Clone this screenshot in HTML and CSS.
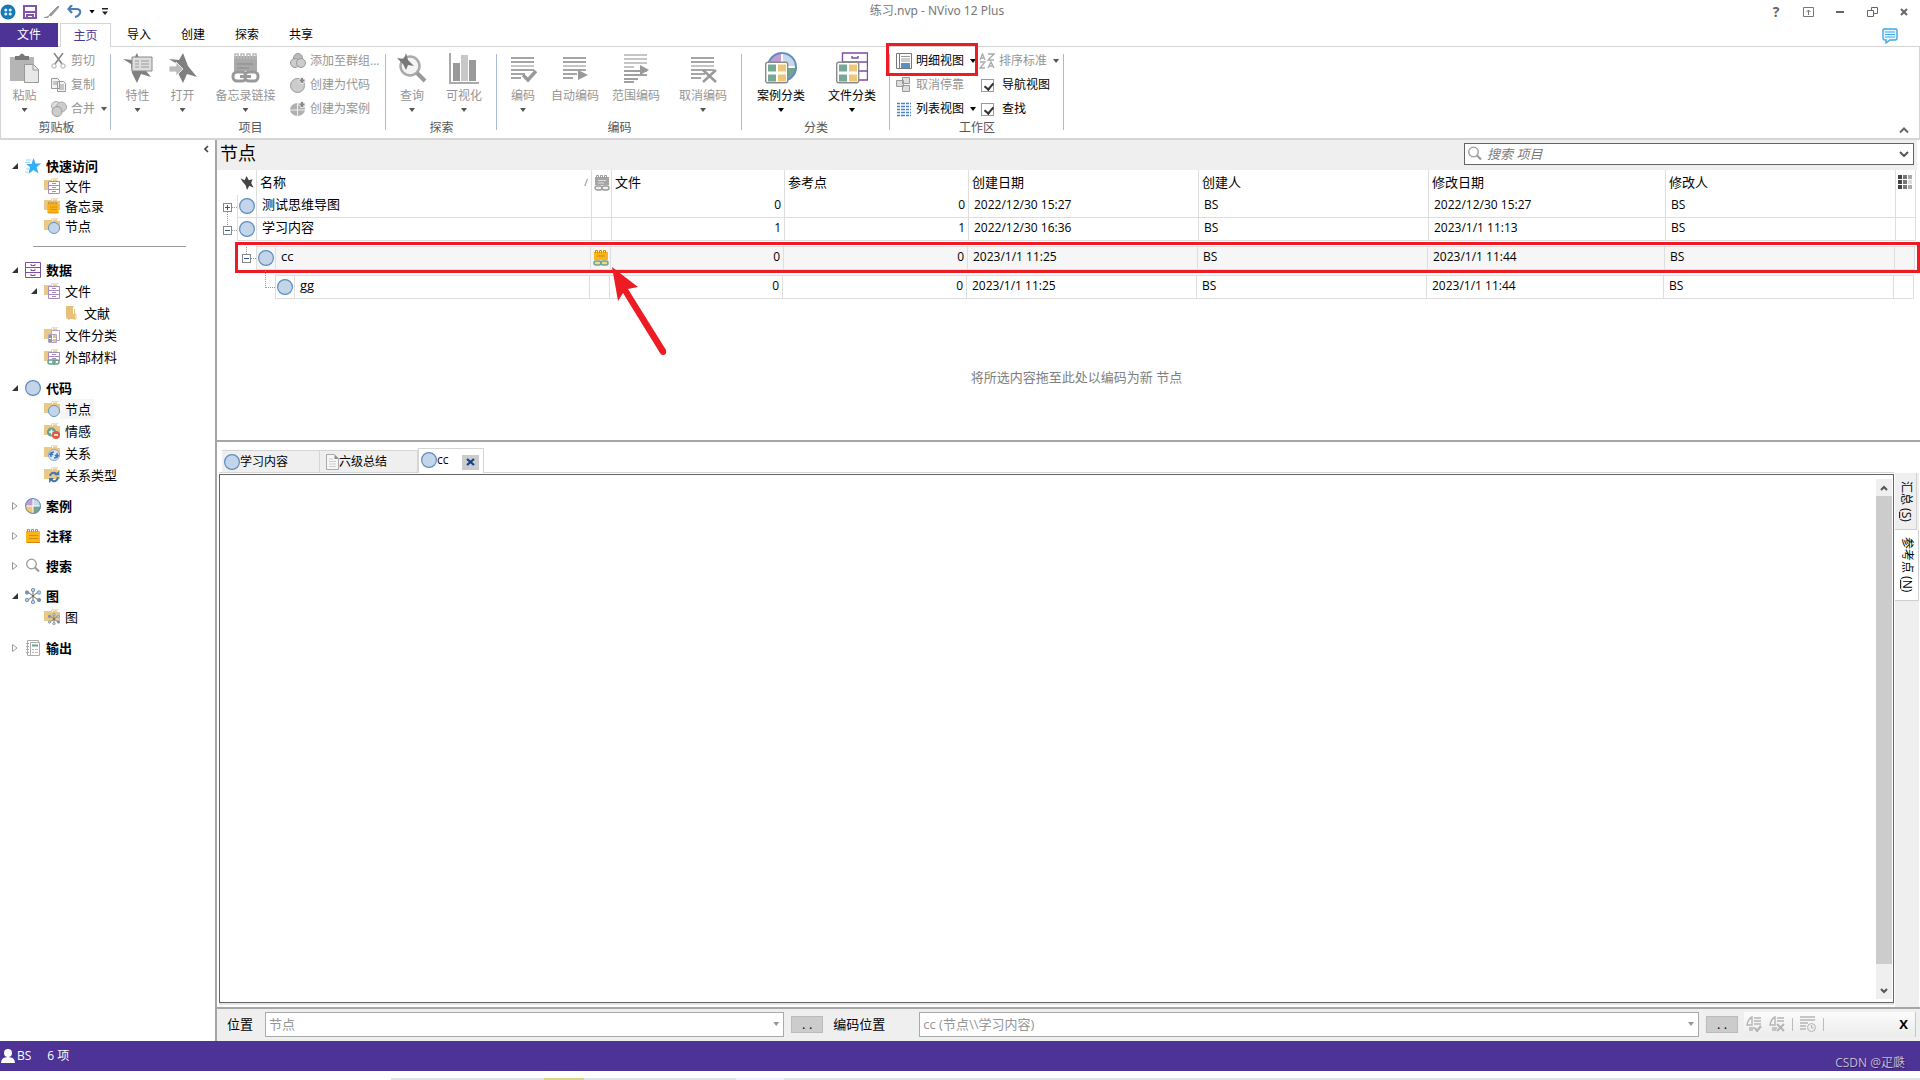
FILE: index.html
```html
<!DOCTYPE html>
<html lang="zh-CN">
<head>
<meta charset="utf-8">
<title>练习.nvp - NVivo 12 Plus</title>
<link rel="stylesheet" href="styles.css">
</head>
<body>
<svg class="sprite" aria-hidden="true">
  <symbol id="node" viewBox="0 0 16 16"><circle cx="8" cy="8" r="7.4" fill="#c5d5e9" stroke="#5b8ec2" stroke-width="1.2"/></symbol>
  <symbol id="folder" viewBox="0 0 16 16"><path d="M0 2h7l1-2h6v3h2v9H0z" fill="#e9c888"/><path d="M8.500 3V1h5v2" fill="none" stroke="#fff8e8"/></symbol>
  <symbol id="cabinet" viewBox="0 0 16 16"><path d="M.5.5h15v15H.5zM.5 5.500h15M.5 10.500h15M6 2v1.500h4V2M6 7v1.500h4V7M6 12v1.500h4V12" fill="#fff" stroke="#7d4fa0"/></symbol>
  <symbol id="pad" viewBox="0 0 16 16"><path d="M1 4q0-1 1-1h12q1 0 1 1v10q0 1-1 1H2q-1 0-1-1z" fill="#f9b418"/><path d="M2.500 4V1.500h2V4M6.500 4V1.500h2V4M10.500 4V1.500h2V4" fill="none" stroke="#c9862b"/><path d="M4 7.500h9M4 10.500h9M2 14.500h13" stroke="#d38a10"/></symbol>
  <symbol id="f-files" viewBox="0 0 16 16"><use href="#folder" width="16" height="16"/><path d="M4.500 3.500h11v12h-11zM4.500 7.500h11M4.500 11.500h11M8 5.500h4M8 9.500h4M8 13.500h4" fill="#fff" stroke="#a88bbd"/></symbol>
  <symbol id="f-pad" viewBox="0 0 16 16"><use href="#folder" width="16" height="16"/><use href="#pad" x="2" y="3" width="14" height="13"/></symbol>
  <symbol id="f-node" viewBox="0 0 16 16"><use href="#folder" width="16" height="16"/><use href="#node" x="4" y="4" width="12" height="12"/></symbol>
  <symbol id="f-class" viewBox="0 0 16 16"><use href="#folder" width="16" height="16"/><path d="M7.500 3.500h8v10h-8zM4.500 7.500h8v8h-8z" fill="#fff" stroke="#b5a3c4"/><path d="M5 8h3v3H5zM5 12h3v3H5z" fill="#72a492"/><path d="M9 8h3v3H9zM9 12h3v3H9z" fill="#edc679"/></symbol>
  <symbol id="f-ext" viewBox="0 0 16 16"><use href="#folder" width="16" height="16"/><path d="M4.500 3.500h11v8h-11zM4.500 7.500h11M8 5.500h4M8 9.500h4" fill="#fff" stroke="#a88bbd"/><rect x="4" y="11" width="7" height="4" rx="2" fill="#fff" stroke="#67a08d" stroke-width="1.500"/><rect x="9" y="11" width="6" height="4" rx="2" fill="none" stroke="#67a08d" stroke-width="1.500"/></symbol>
  <symbol id="f-sent" viewBox="0 0 16 16"><use href="#folder" width="16" height="16"/><circle cx="7.500" cy="9" r="4.500" fill="#67a08d"/><path d="M7.500 6.500v5M5 9h5" stroke="#fff" stroke-width="1.500"/><circle cx="12" cy="12" r="4" fill="#db5b45"/><path d="M10 12h4" stroke="#fff" stroke-width="1.500"/></symbol>
  <symbol id="f-rel" viewBox="0 0 16 16"><use href="#folder" width="16" height="16"/><circle cx="10" cy="10" r="5.500" fill="#dde8f4" stroke="#7fa5cf"/><path d="M7 12V9q0-2 3-2M5.500 10L7 8l2 2M13 8v3q0 2-3 2M11 10l2 2 1.500-2" fill="none" stroke="#3f76b5" stroke-width="1.500"/></symbol>
  <symbol id="f-rtype" viewBox="0 0 16 16"><use href="#folder" width="16" height="16"/><path d="M6 9q1-4 5-3l2 2M14 10q-1 5-5 4l-2-2" fill="none" stroke="#3f76b5" stroke-width="2"/><path d="M10 8h5V4zM10 11H5v5z" fill="#3f76b5"/></symbol>
  <symbol id="map" viewBox="0 0 16 16"><path d="M8 8V2M8 8v6M8 8L3 4M8 8l5-4M8 8l-5 4M8 8l5 4" stroke="#666"/><g fill="#b9cfe6" stroke="#7794b5"><circle cx="8" cy="2" r="1.700"/><circle cx="8" cy="14" r="1.700"/><circle cx="14" cy="4.500" r="1.700"/><circle cx="14" cy="12" r="1.700" fill="#7794b5"/><circle cx="2" cy="4.500" r="1.700" fill="#7794b5"/><circle cx="2" cy="12" r="1.700"/></g></symbol>
  <symbol id="f-map" viewBox="0 0 16 16"><use href="#folder" width="16" height="16"/><use href="#map" x="4" y="4" width="12" height="12"/></symbol>
  <symbol id="open-folder" viewBox="0 0 16 16"><path d="M3 1h8v3h1v10H7l-1 1-3-2z" fill="#e7c17a"/><path d="M10 2v7h3v5h-3" fill="none" stroke="#e7c17a"/><path d="M10.500 2v7" stroke="#fff"/></symbol>
  <symbol id="star" viewBox="0 0 16 16"><path d="M8.500 0l2 5.500H16l-4.500 3.800 2 6.200-5-3.500-5 4 1.500-7L1 6h5.500z" fill="#32aefa"/><path d="M1 2h5M0 4.500h5M1 11h3M0 14h3" stroke="#9bd6fb"/></symbol>
  <symbol id="case" viewBox="0 0 16 16"><path d="M8 8V0A8 8 0 0 0 0 8z" fill="#c39bd3"/><path d="M8 8V0a8 8 0 0 1 8 8z" fill="#c8d8eb"/><path d="M8 8h8a8 8 0 0 1-8 8z" fill="#74a591"/><path d="M8 8v8a8 8 0 0 1-8-8z" fill="#edc679"/><path d="M8 1v14M1 8h14" stroke="#fff"/><circle cx="8" cy="8" r="7.400" fill="none" stroke="#5b8ec2"/></symbol>
  <symbol id="search" viewBox="0 0 16 16"><circle cx="6.500" cy="6" r="4.800" fill="#fff" stroke="currentColor" stroke-width="1.300"/><path d="M10 9.500l4 4" stroke="currentColor" stroke-width="2.200"/></symbol>
  <symbol id="report" viewBox="0 0 16 16"><path d="M2.500.5h11v15h-11zM1 3.500h3M1 6.500h3M1 9.500h3M1 12.500h3" fill="#fff" stroke="#aaa"/><path d="M5.500 2.500h9v13h-9z" fill="#fff" stroke="#aaa"/><path d="M7 5.500h6" stroke="#67a08d" stroke-width="2"/><path d="M7 9.500h2M10 9.500h3M7 12.500h2M10 12.500h3" stroke="#bbb"/></symbol>
  <symbol id="memo-gray" viewBox="0 0 16 16"><path d="M1 2h14v8H1z" fill="#a5a5a5"/><path d="M2.500 3V.5h2V3M6.500 3V.5h2V3M10.500 3V.5h2V3" fill="none" stroke="#999"/><path d="M4 5.500h8M4 8h6" stroke="#ddd"/><rect x="1" y="11" width="7" height="4" rx="2" fill="#eee" stroke="#999" stroke-width="1.300"/><rect x="8" y="11" width="7" height="4" rx="2" fill="#eee" stroke="#999" stroke-width="1.300"/></symbol>
  <symbol id="memo" viewBox="0 0 16 16"><path d="M1 2h14v8H1z" fill="#fcb514"/><path d="M2.500 3V.5h2V3M6.500 3V.5h2V3M10.500 3V.5h2V3M4 6h8" fill="none" stroke="#c9862b"/><rect x="1" y="11" width="7" height="4" rx="2" fill="#f9d976" stroke="#67a59a" stroke-width="1.500"/><rect x="8" y="11" width="7" height="4" rx="2" fill="#f9d976" stroke="#67a59a" stroke-width="1.500"/></symbol>
  <symbol id="nstar" viewBox="0 0 28 30"><path d="M14 0l5 13 9 11-10-3-4 9-5-10-1-9-8-5 10 1z" fill="#808080"/></symbol>
  <symbol id="lines" viewBox="0 0 28 30"><path d="M2 5h23M2 9h23M2 17h23M2 21h14M2 25h10" stroke="#a5a5a5" stroke-width="2"/><path d="M2 13h23" stroke="#c5c5c5" stroke-width="2"/></symbol>
  <symbol id="grid4" viewBox="0 0 24 22"><rect x=".7" y=".7" width="22" height="20.600" rx="2" fill="#fff" stroke="#8a8a8a" stroke-width="1.400"/><path d="M3 3h8v7H3zM3 13h8v7H3z" fill="#77a797"/><path d="M13 3h8v7h-8zM13 13h8v7h-8z" fill="#edc679"/></symbol>
  <symbol id="open" viewBox="0 0 6 6"><path d="M6 0v6H0z" fill="#333"/></symbol>
  <symbol id="closed" viewBox="0 0 6 8"><path d="M.5.500l4.500 3.500-4.500 3.500z" fill="#fff" stroke="#999"/></symbol>
</svg>

<header class="titlebar">
  <div class="quick">
    <svg width="16" height="16" viewBox="0 0 16 16"><circle cx="8" cy="8" r="7.500" fill="#1877b5"/><g fill="#d5efff"><circle cx="5.800" cy="6" r="1.600"/><circle cx="10.200" cy="6" r="1.600"/><circle cx="5.800" cy="10" r="1.600"/><circle cx="10.200" cy="10" r="1.600"/></g></svg>
    <button aria-label="保存"><svg width="14" height="14" viewBox="0 0 14 14"><path d="M1 1h12v12H1z" fill="#fff" stroke="#8553a8" stroke-width="2"/><path d="M1 7h12M4 13v-3h6v3" stroke="#8553a8" stroke-width="2" fill="none"/></svg></button>
    <button aria-label="编辑"><svg width="16" height="14" viewBox="0 0 16 14"><path d="M5 10l9-9 1 1-8 9zM0 12.500h4l1-2" fill="#999" stroke="#999"/></svg></button>
    <button aria-label="撤消"><svg width="15" height="13" viewBox="0 0 15 13"><path d="M2 4h7q5 0 4 4-1 3-5 4M5 0L1.500 4 5 8" fill="none" stroke="#4a7ebb" stroke-width="2.200"/></svg></button>
    <i class="caret"></i><i class="more"></i>
  </div>
  <h1>练习.nvp - NVivo 12 Plus</h1>
  <div class="winbtns">
    <button aria-label="帮助">?</button>
    <button aria-label="功能区选项"><svg width="11" height="10" viewBox="0 0 11 10"><path d="M.5.500h10v9H.5zM5.500 8V3M3.500 5l2-2 2 2" fill="none" stroke="#777"/></svg></button>
    <button aria-label="最小化"><svg width="8" height="2"><path d="M0 0h8v2H0z" fill="#666"/></svg></button>
    <button aria-label="还原"><svg width="11" height="10" viewBox="0 0 11 10"><path d="M.5 3.500h6v6h-6zM4.500 3V.5h6v6H7" fill="none" stroke="#666"/></svg></button>
    <button aria-label="关闭"><svg width="8" height="8" viewBox="0 0 8 8"><path d="M1 1l6 6M7 1L1 7" stroke="#666" stroke-width="2"/></svg></button>
  </div>
</header>

<nav class="tabs">
  <button class="file">文件</button><button class="on">主页</button><button>导入</button><button>创建</button><button>探索</button><button>共享</button>
  <button class="comment" aria-label="反馈"><svg width="16" height="16" viewBox="0 0 16 16"><path d="M2 1h12q1 0 1 1v8q0 2-2 2H8l-4 3v-3H3q-2 0-2-2V2q0-1 1-1z" fill="#e8f5fe" stroke="#41a8e8" stroke-width="1.400"/><path d="M3 4h10M3 6.500h10M3 9h10" stroke="#41a8e8"/></svg></button>
</nav>

<section class="ribbon">
  <div class="group g1">
    <div class="tools">
      <button class="big w-s off"><svg width="29" height="30" viewBox="0 0 29 30"><path d="M0 4h24v24H0z" fill="#b5b5b5"/><path d="M5 3h4q3-5 6 0h4v4H5z" fill="#777"/><path d="M14.500 11.500h9l5 5v13h-14z" fill="#e8e8e8" stroke="#999"/><path d="M23 12v5h5" fill="none" stroke="#999"/></svg><span>粘贴</span><i class="caret"></i></button>
      <div class="stack off">
        <button><svg width="16" height="16" viewBox="0 0 16 16"><path d="M3 0l8 11M12 0L4 11" stroke="#888" stroke-width="1.600"/><circle cx="3" cy="13" r="2.200" fill="#fff" stroke="#aaa"/><circle cx="12" cy="13" r="2.200" fill="#fff" stroke="#aaa"/></svg>剪切</button>
        <button><svg width="16" height="16" viewBox="0 0 16 16"><path d="M.5 1.500h6l2 2v8h-8zM6.500 4.500h6l2 2v8h-8z" fill="#f2f2f2" stroke="#999"/><path d="M2 5h4M2 7h4M8 8h5M8 10h5M8 12h5" stroke="#999"/></svg>复制</button>
        <button><svg width="16" height="16" viewBox="0 0 16 16"><circle cx="5" cy="5" r="4.500" fill="#ddd" stroke="#aaa"/><circle cx="10.500" cy="6" r="5" fill="#ccc" stroke="#aaa"/><circle cx="6" cy="10.500" r="5" fill="#ccc" stroke="#999"/></svg>合并<i class="caret"></i></button>
      </div>
    </div>
    <div class="cap">剪贴板</div>
  </div>
  <div class="group g2">
    <div class="tools">
      <button class="big w-s off"><svg width="30" height="30" viewBox="0 0 30 30"><use href="#nstar" width="28" height="30"/><path d="M9 4h20v14H9z" fill="#ddd" stroke="#888"/><path d="M12 8h4M18 8h8M12 11h4M18 11h8M12 14h4M18 14h8" stroke="#999"/></svg><span>特性</span><i class="caret"></i></button>
      <button class="big w-s off"><svg width="28" height="30" viewBox="0 0 28 30"><use href="#nstar" width="28" height="30"/><path d="M0 13h7V9l7 7-7 7v-4H0z" fill="#bbb" stroke="#fff" stroke-width=".8"/></svg><span>打开</span><i class="caret"></i></button>
      <button class="big w-memo off"><svg width="29" height="31" viewBox="0 0 29 31"><path d="M3 3h23v15H3z" fill="#aaa"/><path d="M4 6V1h3v5M10 6V1h3v5M16 6V1h3v5M22 6V1h3v5" fill="none" stroke="#bbb" stroke-width="1.500"/><path d="M6 11h16M6 15h12" stroke="#888"/><rect x="2" y="19" width="13" height="9" rx="4" fill="#fff" stroke="#999" stroke-width="3"/><rect x="14" y="19" width="13" height="9" rx="4" fill="#fff" stroke="#999" stroke-width="3"/><path d="M9 23.500h11" stroke="#999" stroke-width="3"/></svg><span>备忘录链接</span><i class="caret"></i></button>
      <div class="stack off">
        <button><svg width="16" height="16" viewBox="0 0 16 16"><circle cx="8" cy="5" r="4.500" fill="#bbb" stroke="#999"/><circle cx="5" cy="10" r="4.500" fill="#ccc" stroke="#999"/><circle cx="11" cy="10" r="4.500" fill="#ccc" stroke="#999"/></svg>添加至群组...</button>
        <button><svg width="16" height="16" viewBox="0 0 16 16"><circle cx="7.500" cy="8.500" r="7" fill="#ccc" stroke="#999"/><path d="M12 0v7M8.500 3.500h7" stroke="#eee" stroke-width="3"/><path d="M12 1v5M9.500 3.500h5" stroke="#888" stroke-width="2"/></svg>创建为代码</button>
        <button><svg width="16" height="16" viewBox="0 0 16 16"><ellipse cx="7.500" cy="8.500" rx="7.500" ry="6.500" fill="#b0b0b0"/><path d="M7.500 2v13M0 9h15" stroke="#eee"/><path d="M12 0v7M8.500 3.500h7" stroke="#eee" stroke-width="3"/><path d="M12 1v5M9.500 3.500h5" stroke="#888" stroke-width="2"/></svg>创建为案例</button>
      </div>
    </div>
    <div class="cap">项目</div>
  </div>
  <div class="group g3">
    <div class="tools">
      <button class="big w-m off"><svg width="30" height="30" viewBox="0 0 30 30"><circle cx="13" cy="13" r="9.500" fill="#f4f4f4" stroke="#aaa" stroke-width="2.500"/><path d="M20 20l8 8" stroke="#999" stroke-width="4"/><path d="M9 0l2 7 6 6-6-1-2 5-3-6-6-6 7 1z" fill="#777"/></svg><span>查询</span><i class="caret"></i></button>
      <button class="big w-m off"><svg width="30" height="31" viewBox="0 0 30 31"><path d="M1 0v30h29" fill="none" stroke="#aaa" stroke-width="2"/><path d="M4 10h7v18H4zM20 7h7v21h-7z" fill="#999"/><path d="M12 2h7v26h-7z" fill="#c8c8c8"/></svg><span>可视化</span><i class="caret"></i></button>
    </div>
    <div class="cap">探索</div>
  </div>
  <div class="group g4">
    <div class="tools">
      <button class="big w-m off"><svg width="28" height="30" viewBox="0 0 28 30"><use href="#lines" width="28" height="30"/><path d="M14 22l5 5 8-9" fill="none" stroke="#999" stroke-width="3.500"/></svg><span>编码</span><i class="caret"></i></button>
      <button class="big w-m off"><svg width="28" height="30" viewBox="0 0 28 30"><use href="#lines" width="28" height="30"/><path d="M17 17l10 5-10 5z" fill="#999"/></svg><span>自动编码</span></button>
      <button class="big w-wide off"><svg width="28" height="30" viewBox="0 0 28 30"><path d="M2 2h23M2 6h23M2 10h23M2 14h10" stroke="#c5c5c5" stroke-width="2"/><path d="M2 18h23M2 22h23M2 26h14M2 29h10" stroke="#a0a0a0" stroke-width="2"/><path d="M18 12l9 5-9 5z" fill="#999"/></svg><span>范围编码</span></button>
      <button class="big w-l off"><svg width="28" height="30" viewBox="0 0 28 30"><use href="#lines" width="28" height="30"/><path d="M14 17l13 12M27 17L14 29" stroke="#999" stroke-width="2.500"/></svg><span>取消编码</span><i class="caret"></i></button>
    </div>
    <div class="cap">编码</div>
  </div>
  <div class="group g5">
    <div class="tools">
      <button class="big w-xl"><svg width="32" height="32" viewBox="0 0 32 32"><use href="#case" x="2" width="30" height="30"/><use href="#grid4" y="9" width="24" height="23"/></svg><span>案例分类</span><i class="caret"></i></button>
      <button class="big w-l"><svg width="32" height="32" viewBox="0 0 32 32"><path d="M6.500 1h25v27h-25zM6 10h25M6 19h25M16 4v2h6V4" fill="#fff" stroke="#7d4fa0" stroke-width="1.400"/><use href="#grid4" y="9" width="24" height="23"/></svg><span>文件分类</span><i class="caret"></i></button>
    </div>
    <div class="cap">分类</div>
  </div>
  <div class="group g6">
    <div class="tools">
      <div class="stack">
        <button class="marked"><svg width="16" height="16" viewBox="0 0 16 16"><path d="M.5.500h15v15H.5zM3.500 1v14" fill="#fff" stroke="#777"/><path d="M5 3.500h9M5 6h9M5 8h9" stroke="#999"/><path d="M5 10h9v5H5z" fill="#5b8ec2"/></svg>明细视图<i class="caret"></i></button>
        <button class="off"><svg width="16" height="16" viewBox="0 0 16 16"><path d="M6.500.5h7v6h-7zM.5 3.500h7v6h-7zM6.500 8.500h7v6h-7z" fill="#ddd" stroke="#999"/></svg>取消停靠</button>
        <button><svg width="16" height="16" viewBox="0 0 16 16"><path d="M1 2.500h14M1 5.500h14M1 8.500h14M1 11.500h14M1 14.500h14" stroke="#4a82c0" stroke-width="1.400" stroke-dasharray="3 1 4 1"/></svg>列表视图<i class="caret"></i></button>
      </div>
      <div class="stack second">
        <button class="off"><svg width="16" height="16" viewBox="0 0 16 16"><path d="M1 7l2.500-6L6 7M2 5h3M9 1h6L9 7h6M1 9h5l-5 6h5M9 15l3-6 3 6M10 13h4" fill="none" stroke="#aaa" stroke-width="1.300"/></svg>排序标准<i class="caret"></i></button>
        <label><input type="checkbox" checked>导航视图</label>
        <label><input type="checkbox" checked>查找</label>
      </div>
    </div>
    <div class="cap">工作区</div>
  </div>
  <button class="fold" aria-label="折叠功能区"><svg width="10" height="6" viewBox="0 0 10 6"><path d="M1 5.500l4-4 4 4" fill="none" stroke="#666" stroke-width="2"/></svg></button>
</section>

<div class="body">
  <aside class="nav">
    <button class="hide" aria-label="隐藏导航"><svg width="5" height="8" viewBox="0 0 5 8"><path d="M4 1L1 4l3 3" fill="none" stroke="#444" stroke-width="1.600"/></svg></button>
    <section class="tight">
      <h2><svg class="tw"><use href="#open"/></svg><svg class="ic"><use href="#star"/></svg>快速访问</h2>
      <ul>
        <li><svg class="ic"><use href="#f-files"/></svg><a href="#">文件</a></li>
        <li><svg class="ic"><use href="#f-pad"/></svg><a href="#">备忘录</a></li>
        <li><svg class="ic"><use href="#f-node"/></svg><a href="#">节点</a></li>
      </ul>
    </section>
    <hr>
    <section>
      <h2><svg class="tw"><use href="#open"/></svg><svg class="ic"><use href="#cabinet"/></svg>数据</h2>
      <ul>
        <li class="parent"><svg class="tw"><use href="#open"/></svg><svg class="ic"><use href="#f-files"/></svg><a href="#">文件</a></li>
        <li class="deep"><svg class="ic"><use href="#open-folder"/></svg><a href="#">文献</a></li>
        <li><svg class="ic"><use href="#f-class"/></svg><a href="#">文件分类</a></li>
        <li><svg class="ic"><use href="#f-ext"/></svg><a href="#">外部材料</a></li>
      </ul>
    </section>
    <section>
      <h2><svg class="tw"><use href="#open"/></svg><svg class="ic"><use href="#node"/></svg>代码</h2>
      <ul>
        <li><svg class="ic"><use href="#f-node"/></svg><a href="#" class="cur">节点</a></li>
        <li><svg class="ic"><use href="#f-sent"/></svg><a href="#">情感</a></li>
        <li><svg class="ic"><use href="#f-rel"/></svg><a href="#">关系</a></li>
        <li><svg class="ic"><use href="#f-rtype"/></svg><a href="#">关系类型</a></li>
      </ul>
    </section>
    <section><h2><svg class="tw"><use href="#closed"/></svg><svg class="ic"><use href="#case"/></svg>案例</h2></section>
    <section><h2><svg class="tw"><use href="#closed"/></svg><svg class="ic"><use href="#pad"/></svg>注释</h2></section>
    <section><h2><svg class="tw"><use href="#closed"/></svg><svg class="ic gray"><use href="#search"/></svg>搜索</h2></section>
    <section>
      <h2><svg class="tw"><use href="#open"/></svg><svg class="ic"><use href="#map"/></svg>图</h2>
      <ul><li><svg class="ic"><use href="#f-map"/></svg><a href="#">图</a></li></ul>
    </section>
    <section><h2><svg class="tw"><use href="#closed"/></svg><svg class="ic"><use href="#report"/></svg>输出</h2></section>
  </aside>

  <main>
    <section class="list">
      <div class="head">
        <h2>节点</h2>
        <div class="find">
          <svg class="ic gray"><use href="#search"/></svg>
          <input type="text" placeholder="搜索 项目" aria-label="搜索项目">
          <button aria-label="搜索选项"><svg width="10" height="6" viewBox="0 0 10 6"><path d="M1 1l4 4 4-4" fill="none" stroke="#555" stroke-width="2"/></svg></button>
        </div>
      </div>
      <table>
        <thead>
          <tr><td></td><th><svg width="14" height="14" viewBox="0 0 28 30"><path d="M13 0l5 9 8-2-3 8 5 10-9-4-5 9-3-10-6-7-5-8 9 4z" fill="#444"/></svg></th><th>名称<span class="sort">∕</span></th><th><svg class="ic"><use href="#memo-gray"/></svg></th><th>文件</th><th>参考点</th><th>创建日期</th><th>创建人</th><th>修改日期</th><th>修改人</th><th><svg width="15" height="15" viewBox="0 0 15 15"><path d="M0 0h4v4H0zM0 5h4v4H0zM0 10h4v4H0z" fill="#444"/><path d="M5 0h4v4H5zM5 5h4v4H5zM5 10h4v4H5z" fill="#777"/><path d="M10 0h4v4h-4zM10 10h4v4h-4z" fill="#aaa"/><path d="M10 5h4v4h-4z" fill="#ddd"/></svg></th></tr>
        </thead>
        <tbody>
          <tr><td><svg class="tree" width="21" height="22"><path d="M10.500 16v13M15 11.500h6" stroke="#999" stroke-dasharray="1 1"/><rect x="6.500" y="7.500" width="8" height="8" fill="#fff" stroke="#888"/><path d="M8 11.500h5M10.500 9v5" stroke="#2f55a0"/></svg></td><td><svg class="ic"><use href="#node"/></svg></td><td>测试思维导图</td><td></td><td>0</td><td>0</td><td>2022/12/30 15:27</td><td>BS</td><td>2022/12/30 15:27</td><td>BS</td><td></td></tr>
          <tr><td><svg class="tree" width="21" height="22"><path d="M15 11.500h6" stroke="#999" stroke-dasharray="1 1"/><rect x="6.500" y="7.500" width="8" height="8" fill="#fff" stroke="#888"/><path d="M8 11.500h5" stroke="#2f55a0"/></svg></td><td><svg class="ic"><use href="#node"/></svg></td><td>学习内容</td><td></td><td>1</td><td>1</td><td>2022/12/30 16:36</td><td>BS</td><td>2023/1/1 11:13</td><td>BS</td><td></td></tr>
          <tr class="lv2 hot"><td><svg class="tree" width="40" height="22"><path d="M29.500 0v8M34 11.500h6" stroke="#999" stroke-dasharray="1 1"/><rect x="25.500" y="7.500" width="8" height="8" fill="#fff" stroke="#888"/><path d="M27 11.500h5" stroke="#2f55a0"/></svg></td><td><svg class="ic"><use href="#node"/></svg></td><td>cc</td><td><svg class="ic"><use href="#memo"/></svg><svg class="pointer" width="62" height="92" viewBox="0 0 62 92"><path d="M3 2l26 20-10 2 38 61q1 5-3 5-2 0-3-2L14 28l-5 8z" fill="#ed1c24"/></svg></td><td>0</td><td>0</td><td>2023/1/1 11:25</td><td>BS</td><td>2023/1/1 11:44</td><td>BS</td><td></td></tr>
          <tr class="lv3"><td><svg class="tree" width="59" height="22"><path d="M48.500-5v17M49 11.500h10" stroke="#999" fill="none" stroke-dasharray="1 1"/></svg></td><td><svg class="ic"><use href="#node"/></svg></td><td>gg</td><td></td><td>0</td><td>0</td><td>2023/1/1 11:25</td><td>BS</td><td>2023/1/1 11:44</td><td>BS</td><td></td></tr>
        </tbody>
      </table>
      <p class="hint">将所选内容拖至此处以编码为新 节点</p>
    </section>

    <section class="detail">
      <div class="left">
        <div class="doctabs">
          <button><svg class="ic"><use href="#node"/></svg>学习内容</button>
          <button><svg width="13" height="16" viewBox="0 0 13 16"><path d="M.5.500h8l4 4v11H.5z" fill="#f7f7f7" stroke="#aaa"/><path d="M8.500 1v4h4" fill="#888"/><path d="M3 5h4M3 7.500h7M3 10h7M3 12.500h7" stroke="#ccc"/></svg>六级总结</button>
          <button class="on"><svg class="ic"><use href="#node"/></svg>cc<span class="x"><svg width="9" height="8" viewBox="0 0 9 8"><path d="M1 1l7 6M8 1L1 7" stroke="#123f8c" stroke-width="2.200"/></svg></span></button>
        </div>
        <div class="doc">
          <div class="scroll">
            <button aria-label="向上"><svg width="8" height="6" viewBox="0 0 8 6"><path d="M1 5l3-3 3 3" fill="none" stroke="#555" stroke-width="2"/></svg></button>
            <div class="thumb"></div>
            <button aria-label="向下"><svg width="8" height="6" viewBox="0 0 8 6"><path d="M1 1l3 3 3-3" fill="none" stroke="#555" stroke-width="2"/></svg></button>
          </div>
        </div>
      </div>
      <div class="sidetabs"><button>汇总 (<u>S</u>)</button><button class="on">参考点 (<u>N</u>)</button></div>
    </section>

    <div class="codebar">
      <label for="loc">位置</label>
      <span class="combo c1"><select id="loc" disabled><option>节点</option></select><i class="caret"></i></span>
      <button class="dots">. .</button>
      <label for="at" class="l2">编码位置</label>
      <span class="combo c2"><select id="at" disabled><option>cc (节点\\学习内容)</option></select><i class="caret"></i></span>
      <button class="dots">. .</button>
      <div class="actions">
        <button aria-label="编码"><svg width="16" height="16" viewBox="0 0 16 16"><path d="M1 9q1-6 5-8v8zM8 2h7M8 5h7M8 8h7M3 12h6M3 14h4" fill="none" stroke="#b5b5b5" stroke-width="1.400"/><path d="M9 12l2 3 4-5" fill="none" stroke="#b5b5b5" stroke-width="2.200"/></svg></button>
        <button aria-label="取消编码"><svg width="16" height="16" viewBox="0 0 16 16"><path d="M1 9q1-6 5-8v8zM8 2h7M8 5h7M3 12h5M3 14h4" fill="none" stroke="#b5b5b5" stroke-width="1.400"/><path d="M8 8l7 7M15 8l-7 7" stroke="#b5b5b5" stroke-width="2"/></svg></button>
        <i class="sep"></i>
        <button aria-label="最近"><svg width="16" height="16" viewBox="0 0 16 16"><path d="M0 1h15M0 4h15M0 7h8M0 10h6M0 13h6" stroke="#b5b5b5" stroke-width="1.500"/><circle cx="11.500" cy="11.500" r="4" fill="#eee" stroke="#b5b5b5"/><path d="M11.500 9v3h2" fill="none" stroke="#b5b5b5"/></svg></button>
        <i class="sep"></i>
        <button class="end">X</button>
      </div>
    </div>
  </main>
</div>

<footer class="status">
  <svg width="16" height="16" viewBox="0 0 16 16"><circle cx="8" cy="5" r="4" fill="#fff"/><path d="M1 15q0-6 7-6t7 6z" fill="#fff"/></svg>
  <span>BS</span><span class="count">6 项</span><span class="mark">CSDN @疋瓞</span>
</footer>
<div class="strip"></div>
</body>
</html>
```
FILE: styles.css
```css
* { box-sizing: border-box; }
body {
  margin: 0;
  height: 100vh;
  display: flex;
  flex-direction: column;
  overflow: hidden;
  background: #fff;
  color: #000;
  font: 12px/16px "Open Sans", "Noto Sans CJK SC", sans-serif;
}
button, input, select { font: inherit; color: inherit; margin: 0; padding: 0; border: 0; background: none; }
h1, h2, p, ul { margin: 0; padding: 0; font-weight: normal; }
svg { display: block; flex: none; }
.sprite { position: absolute; width: 0; height: 0; }
.ic { width: 16px; height: 16px; }
.gray { color: #999; }
.caret {
  flex: none;
  width: 6px;
  height: 4px;
  background: currentColor;
  clip-path: polygon(0 0, 100% 0, 50% 100%);
}
.off { color: #959595; }
.off .caret { background: #555; }

/* Title bar */
.titlebar {
  height: 23px;
  display: grid;
  grid-template-columns: 1fr auto 1fr;
  align-items: center;
}
.titlebar h1 { font-family: "Noto Sans", "Noto Sans CJK SC", sans-serif; font-size: 12px; color: #777; padding: 0 46px 2px 0; }
.quick { display: flex; align-items: center; gap: 7px; }
.more { width: 6px; height: 7px; background: #222; clip-path: polygon(0 0, 100% 0, 100% 20%, 0 20%, 0 50%, 100% 50%, 50% 100%, 0 50%); }
.winbtns { display: flex; justify-content: flex-end; }
.winbtns button { width: 32px; display: grid; place-items: center; color: #666; font-weight: bold; font-size: 14px; }

/* Ribbon tabs */
.tabs { display: flex; height: 24px; border-bottom: 1px solid #d5d5d5; }
.tabs button { width: 54px; height: 24px; line-height: 24px; }
.tabs .file { width: 58px; background: #4d3395; color: #fff; margin-right: 2px; }
.tabs .on { width: 51px; margin-right: 1px; background: #fff; color: #4d3395; border: 1px solid #d5d5d5; border-bottom: 0; }
.tabs .comment { width: 16px; margin: 0 22px 0 auto; padding-top: 2px; }

/* Ribbon */
.ribbon {
  display: flex;
  height: 93px;
  flex: none;
  border: 1px solid #d5d5d5;
  border-width: 0 1px 2px;
}
.group {
  display: flex;
  flex-direction: column;
  background: linear-gradient(#a9b9d6, #a9b9d6) no-repeat right 7px / 1px 76px;
}
.g1 { width: 110px; padding-left: 1px; }
.g2 { width: 275px; padding-left: 4px; }
.g3 { width: 111px; }
.g4 { width: 245px; }
.g5 { width: 148px; }
.g6 { width: 174px; }
.tools { display: flex; height: 73px; padding-top: 4px; }
.cap { text-align: center; color: #555; line-height: 16px; }
.big { display: grid; grid-template-rows: 34px 21px 8px; justify-items: center; align-items: center; align-content: start; }
.big span { white-space: nowrap; }
.w-s { width: 45px; }
.w-m { width: 52px; }
.w-l { width: 64px; }
.w-wide { width: 70px; }
.w-xl { width: 78px; }
.w-memo { width: 81px; }
.stack { display: grid; grid-template-rows: repeat(3, 24px); padding-left: 4px; margin-top: -2px; }
.g6 .stack { padding-left: 6px; }
.g6 .second { padding-left: 3px; }
.stack button, .stack label { display: flex; align-items: center; gap: 4px; white-space: nowrap; }
.stack .caret { margin-left: 2px; }
.marked { position: relative; }
.marked::after {
  content: "";
  position: absolute;
  inset: -6px -2px -3px -10px;
  border: 3px solid #ed1c24;
}
.stack input {
  appearance: none;
  width: 13px;
  height: 13px;
  margin: 0 4px 0 2px;
  border: 1px solid #999;
  background: #fff;
}
.stack input:checked::before {
  content: "";
  display: block;
  width: 4px;
  height: 7px;
  margin: 1px 0 0 4px;
  border: solid #333;
  border-width: 0 2px 2px 0;
  transform: rotate(40deg);
}
.fold { margin: auto 10px 5px auto; }

/* Body */
.body { flex: 1; min-height: 0; display: flex; }
.nav { width: 217px; flex: none; border-right: 2px solid #a6a6a6; font-size: 13px; }
.hide { display: block; margin: 0 6px 0 auto; padding: 5px 0 2px; }
.nav section { margin-bottom: 9px; }
.nav h2 { display: flex; align-items: center; height: 21px; padding-left: 12px; font-size: 13px; font-weight: bold; }
.nav h2 .tw { margin-right: 7px; }
.nav h2 .ic { margin-right: 5px; }
.tw { width: 6px; height: 8px; }
.nav ul { list-style: none; }
.nav li { display: flex; align-items: center; height: 22px; padding-left: 44px; }
.nav .tight li { height: 20px; }
.nav a { color: #000; text-decoration: none; padding: 0 3px 0 5px; line-height: 20px; }
.nav .cur { background: #f5f5f5; }
.nav .parent { padding-left: 31px; }
.parent .tw { margin-right: 7px; }
.nav .deep { padding-left: 63px; }
.nav hr { width: 153px; margin: 10px 0 12px 33px; border: 0; border-top: 1px solid #999; }

main { flex: 1; min-width: 0; display: flex; flex-direction: column; }
.list { height: 302px; flex: none; display: flex; flex-direction: column; border-bottom: 2px solid #a6a6a6; }
.head { display: flex; justify-content: space-between; align-items: center; height: 30px; flex: none; margin-right: 3px; padding: 0 3px 2px; background: #efefef; }
.head h2 { font-size: 18px; line-height: 24px; padding-bottom: 2px; }
.find { display: flex; align-items: center; width: 450px; height: 22px; padding: 0 4px 0 2px; background: #fff; border: 1px solid #646464; }
.find input { flex: 1; font-size: 13px; font-style: italic; padding: 0 0 1px 4px; outline: 0; }
.find input::placeholder { color: #777; opacity: 1; }

/* Node table */
table { display: block; margin-right: 4px; }
thead, tbody { display: block; }
tr {
  --indent: 21px;
  display: grid;
  grid-template-columns: var(--indent) 19px 1fr 20px 173px 184px 230px 230px 237px 230px 20px;
  position: relative;
}
td, th {
  display: flex;
  align-items: center;
  height: 23px;
  padding: 0 5px 3px;
  border: solid #dedede;
  border-width: 0 1px 1px 0;
  font-weight: normal;
  line-height: 17px;
}
th { height: 25px; padding: 0 3px 1px; font-size: 13px; border-bottom: 0; }
td:first-child { padding: 0; border-width: 0 1px 0 0; }
thead td:first-child { border: 0; }
td:nth-child(2), th:nth-child(2), td:nth-child(4), th:nth-child(4), th:nth-child(11) { padding: 0; justify-content: center; }
td:nth-child(3) { font-size: 13px; }
td:nth-child(5), td:nth-child(6) { justify-content: flex-end; padding-right: 3px; }
.sort { margin-left: auto; color: #777; font-size: 10px; }
.tree { overflow: visible; }
.lv2 { --indent: 40px; margin: 5px 1px 0 0; }
.lv3 { --indent: 59px; margin: 5px 2px 0 0; }
.lv2 td, .lv3 td { height: 24px; border-top-width: 1px; }
.lv2 td:first-child, .lv3 td:first-child { border-top-width: 0; }
.hot td:not(:first-child) { background: #f6f6f6; }
.hot::after {
  content: "";
  position: absolute;
  inset: -4px -5px -3px 18px;
  border: 3px solid #ed1c24;
}
.hot td:nth-child(4) { position: relative; }
.pointer { position: absolute; left: 18px; top: 18px; z-index: 1; }
.hint { margin: auto; padding: 14px 0 0 16px; font-size: 13px; color: #808080; }

/* Detail pane */
.detail { flex: 1; min-height: 0; display: flex; padding: 6px 1px 0 2px; }
.left { flex: 1; display: flex; flex-direction: column; padding-bottom: 4px; }
.doctabs { display: flex; align-items: flex-end; height: 25px; padding-left: 3px; border-bottom: 1px solid #d5d5d5; margin-bottom: 1px; }
.doctabs button { display: flex; align-items: center; width: 98px; height: 22px; padding-left: 2px; background: #efefef; border: solid #d5d5d5; border-width: 1px 1px 0 0; }
.doctabs button:nth-child(2) { padding-left: 6px; }
.doctabs .on { width: 66px; height: 25px; padding-bottom: 3px; background: #fff; border-left-width: 1px; margin-bottom: -1px; }
.doctabs .x { display: grid; place-items: center; width: 17px; height: 15px; margin: 5px 4px 0 auto; background: #ccc; }
.doc { flex: 1; display: flex; justify-content: flex-end; border: 1px solid #646464; padding: 4px 1px 3px; box-shadow: 0 2px 0 #e4e4e4; }
.scroll { display: flex; flex-direction: column; width: 16px; background: #efefef; }
.scroll button { display: grid; place-items: center; height: 17px; }
.thumb { flex: 1; background: #ccc; margin-bottom: 18px; }
.sidetabs { display: flex; flex-direction: column; width: 24px; margin: 25px 0 0 1px; background: #efefef; }
.sidetabs button { writing-mode: vertical-rl; text-orientation: sideways; width: 22px; height: 57px; border: solid #d0d0d0; border-width: 0 1px 1px 0; }
.sidetabs .on { height: 71px; width: 24px; background: #fff; }

/* Coding bar */
.codebar { display: flex; align-items: center; height: 34px; flex: none; padding: 0 4px 2px 10px; background: #efefef; border-top: 2px solid #a6a6a6; font-size: 13px; }
.combo { display: flex; align-items: center; height: 25px; background: #fff; border: 1px solid #aaa; padding-right: 4px; color: #959595; }
.combo select { appearance: none; flex: 1; height: 23px; padding-left: 3px; opacity: 1; color: #959595; font-size: 13px; }
.c1 { flex: 518; margin: 0 7px 0 12px; }
.c2 { flex: 781; margin: 0 7px 0 34px; }
.dots { width: 32px; height: 17px; line-height: 12px; background: #ccc; border: 1px solid #bbb; }
.l2 { margin-left: 10px; }
.actions { display: flex; align-items: center; gap: 7px; width: 172px; height: 25px; margin-left: 6px; padding: 0 7px 0 2px; background: linear-gradient(#fbfbfb, #ececec); border-right: 1px solid #c5c5c5; }
.sep { width: 1px; height: 13px; background: #bbb; }
.end { margin-left: auto; font-weight: bold; }

/* Status bar */
.status { display: flex; align-items: center; height: 30px; flex: none; background: #4d3395; color: #fff; gap: 1px; }
.count { margin-left: 15px; }
.mark { margin: 14px 15px 0 auto; color: #c4bcd9; text-shadow: 1px 1px 1px #2c1c5c; }
.strip {
  height: 9px;
  flex: none;
  background: linear-gradient(90deg, #fff 391px, #dde1e8 391px 544px, #d8d68a 544px 584px, #dde1e8 584px 736px, #f0f0fa 736px 784px, #dde1e8 784px) no-repeat 0 7px;
}
```
